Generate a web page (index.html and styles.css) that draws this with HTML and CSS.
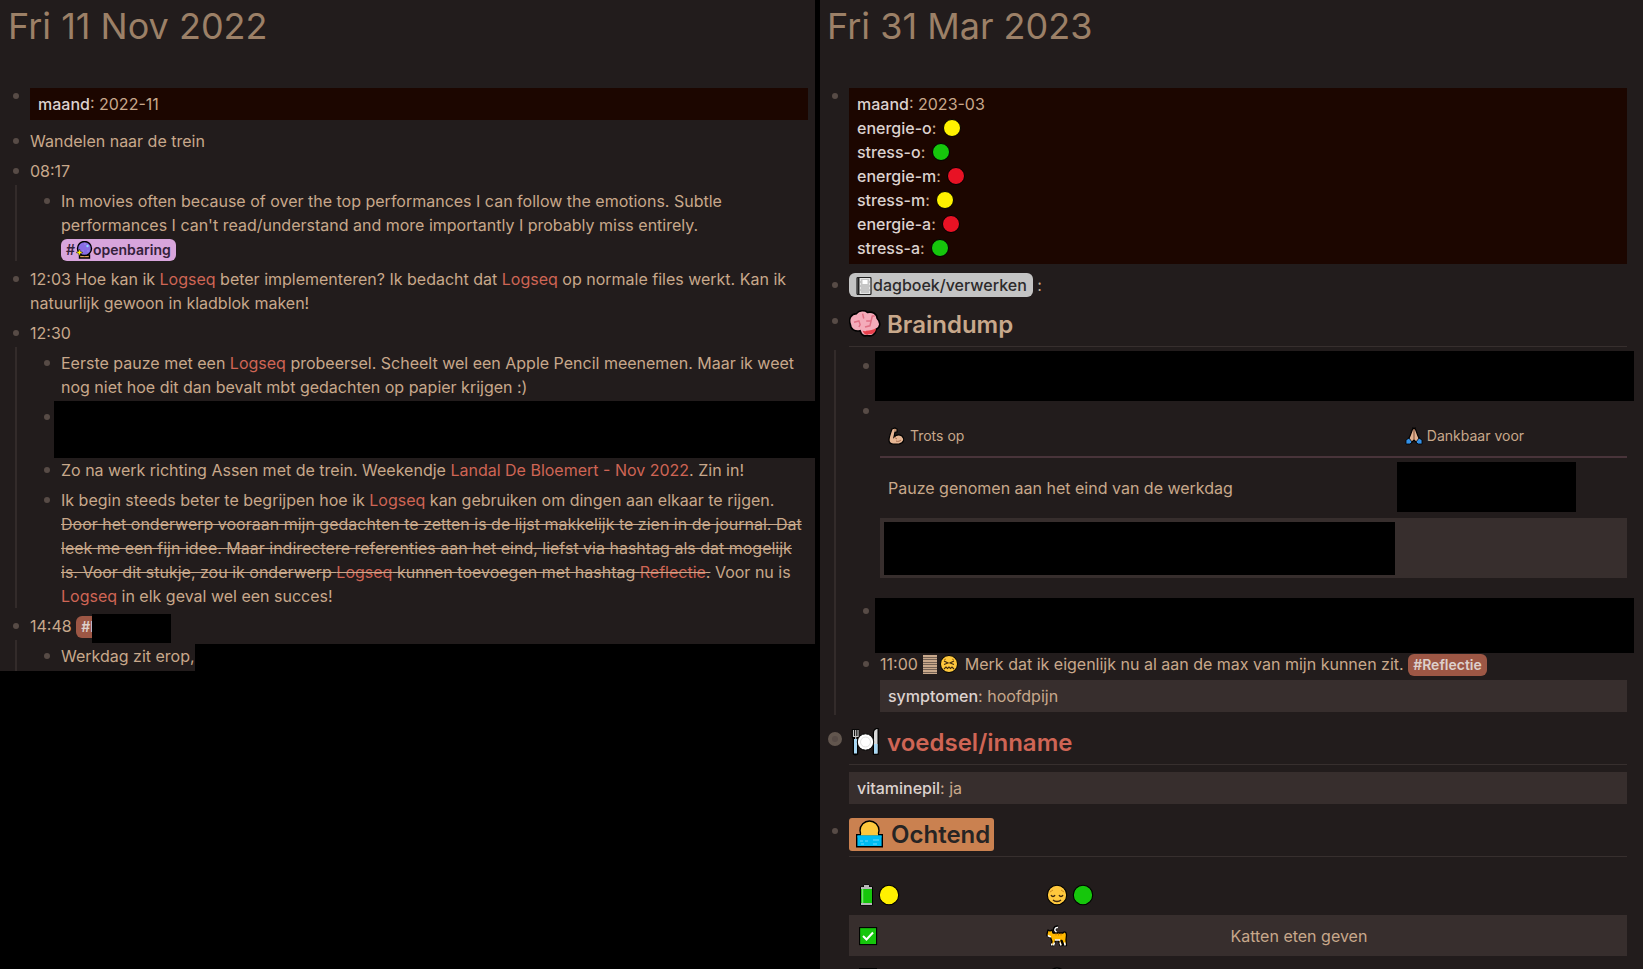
FILE: index.html
```html
<!DOCTYPE html>
<html lang="nl">
<head>
<meta charset="utf-8">
<title>Journal</title>
<link rel="stylesheet" href="styles.css">
</head>
<body>
<svg class="defs" width="0" height="0" aria-hidden="true">
  <symbol id="dot" viewBox="0 0 20 20"><circle cx="10" cy="10" r="8.500" fill="currentColor" stroke="#000" stroke-width="1"/></symbol>
  <symbol id="ball" viewBox="0 1 17 18"><path d="M4 15h10v3H4z" fill="#d9a05b" stroke="#000" stroke-width="1.400"/><circle cx="9" cy="8.500" r="7" fill="#886ce4" stroke="#000" stroke-width="1.400"/><circle cx="12" cy="6" r="1.200" fill="#8fd8ff"/><path d="M9 4h1M7 11h1M12 11h1" stroke="#b8a6f5"/><path d="M4 9l1 2.500 2.500 1-2.500 1-1 2.500-1-2.500-2.500-1 2.500-1z" fill="#fff100" stroke="#000" stroke-width=".4"/></symbol>
  <symbol id="book" viewBox="0 1 17 18"><rect x="1.500" y="1.500" width="14" height="17" rx="1" fill="#e6e6e6" stroke="#222" stroke-width="1.200"/><path d="M3 2v16" stroke="#222" stroke-width="2"/><path d="M6 4h8M5 6h9M6 8h8M5 10h9M6 12h8M5 14h9M6 16h8" stroke="#666" stroke-width="1" stroke-dasharray="1 1"/><rect x="7" y="4" width="5" height="4" fill="#fff"/></symbol>
  <symbol id="brain" viewBox="3 3 26 23"><path d="M4 15c-2-5 1-9 5-9 2-3 7-3 9-1 4-1 8 1 8 5 3 3 3 7-1 9 0 4-4 6-7 5-3 1-5-1-6-4-4 1-8-1-8-5z" fill="#f4abba" stroke="#000" stroke-width="1.300"/><path d="M17 20c3 0 6-1 8-2 0 4-3 5-6 5-3 1-4-1-5-3 1 0 2 1 3 0z" fill="#e8404c"/><path d="M7 13l4-1 1 3-1 2M14 6l1 4M17 12h4l1-4h2M21 12l-1 4-4 1" fill="none" stroke="#e06f84" stroke-width="1.200"/></symbol>
  <symbol id="arm" viewBox="1 1 18 18"><path d="M5 3l3-1 2 1v3H8l-1 5c2-2 5-3 8-1 3 3 2 7-3 8H6c-3 0-4-2-4-4C2 11 4 6 5 3z" fill="#e6b593" stroke="#000" stroke-width="1.200"/><path d="M7 11l3 2M9 15c2 1 4 0 5-1M7 4h2" fill="none" stroke="#a36c4d"/></symbol>
  <symbol id="pray" viewBox="1 1 18 18"><path d="M9 2l-3 8-2 4 3 3 3-3 3 3 3-3-2-4-3-8-1 1z" fill="#e0b090" stroke="#000" stroke-width="1.200"/><path d="M10 3v11" stroke="#7b4a35" stroke-width="1"/><path d="M2 14l3-2 3 4-2 2H2zM18 14l-3-2-3 4 2 2h4z" fill="#3391e8" stroke="#000" stroke-width=".8"/></symbol>
  <symbol id="stack" viewBox="0 0 16 20"><path d="M1 2h14M1 4.500h14M1 7h14M1 9.500h14M1 12h14M1 14.500h14M1 17h14M1 19.500h14" stroke="#c8a88b" stroke-width="1.800"/></symbol>
  <symbol id="pained" viewBox="0 0 20 20"><circle cx="10" cy="10" r="8.500" fill="#ffc83d" stroke="#000" stroke-width="1"/><path d="M5 6l2-1M15 6l-2-1" stroke="#9c6500" stroke-width=".8"/><path d="M5 7l4 2-4 1.500M15 7l-4 2 4 1.500M5 15l2-2 1.500 1.500L10 13l1.500 1.500L13 13l2 2" fill="none" stroke="#402a10" stroke-width="1.100"/></symbol>
  <symbol id="plate" viewBox="0 0 32 28"><path d="M3.500 2v7l1 2v15q2 1.500 4 0V11l1-2V2z" fill="#000" stroke="#000" stroke-width="1.500"/><path d="M4.500 2v6.500h4.500V2M6.700 2v9" fill="none" stroke="#c6c6c6" stroke-width="1.200"/><path d="M5 11h3v14.500H5z" fill="#a8d8f5"/><path d="M25 25.500V5c0-3 2-4 3.500-4v24.500z" fill="#d8d8d8" stroke="#000" stroke-width="2.400"/><path d="M25 25.500V5c0-3 2-4 3.500-4v24.500z" fill="#d8d8d8"/><path d="M25 16h3.500v9.500H25z" fill="#a8d8f5"/><circle cx="16.500" cy="14" r="8.200" fill="#fff" stroke="#000" stroke-width="1"/><circle cx="16.500" cy="14" r="5" fill="none" stroke="#e2e2e2"/></symbol>
  <symbol id="sunrise" viewBox="0 0 32 28"><circle cx="16.500" cy="10.500" r="9.500" fill="#ffc83d" stroke="#000" stroke-width="1.400"/><path d="M3.700 14.700h25.600v12H3.700z" fill="#00bcf2" stroke="#000" stroke-width="1.400"/><path d="M8 14.500h17" stroke="#ffc83d" stroke-width="2"/><path d="M4.500 15.500h24v2h-24z" fill="#00bcf2"/><path d="M7 21h3M12 21h3M20 20h6M8 24h3M20 24h4" stroke="#6fd9f8" stroke-width="1"/></symbol>
  <symbol id="battery" viewBox="0 0 19 24"><path d="M7 2h5v2h3.500v18h-12V4H7z" fill="#16c60c" stroke="#000" stroke-width="1"/><path d="M4 4h11v2H4zM4 20h11v2H4zM7 2h5v2H7z" fill="#b7b7b7"/><path d="M5.500 6v14" stroke="#78e072" stroke-width="1.500"/></symbol>
  <symbol id="bigdot" viewBox="0 0 26 24"><circle cx="13" cy="12" r="9.700" fill="currentColor" stroke="#000" stroke-width="1.100"/></symbol>
  <symbol id="calm" viewBox="0 0 26 24"><circle cx="13" cy="12" r="9.700" fill="#ffc83d" stroke="#000" stroke-width="1.100"/><path d="M6 9l3-2M20 9l-3-2" stroke="#d08b1c"/><path d="M7 12c1 2 3 2 4 0M15 12c1 2 3 2 4 0M9 17c2 2 6 2 8 0" fill="none" stroke="#402a10" stroke-width="1.300"/></symbol>
  <symbol id="check" viewBox="0 0 22 24"><rect x="2.600" y="3.600" width="17" height="17" fill="#16c60c" stroke="#000" stroke-width="1.100"/><path d="M6 12l3.500 3.500L16 8.500" fill="none" stroke="#fff" stroke-width="2"/></symbol>
  <symbol id="cat" viewBox="0 0 26 24"><path d="M12 7.500c-3-1.500-1.500-5 2-4.500" fill="none" stroke="#000" stroke-width="3.200"/><path d="M4 6l2 1 2-1 1 3h10c1-2 3.500-1 3.500 2l-.5 5 .5 5.500h-2.500l-2-5h-1l1.500 5H16l-1.500-5h-3l-1.500 5H7l1-4-1.500-4C4 13 2.500 12 3 10z" fill="#ffb900" stroke="#000" stroke-width="1.300" stroke-linejoin="round"/><path d="M12.500 8c-3-1.500-1.500-5 1.500-4.500" fill="none" stroke="#fff" stroke-width="1.400"/><path d="M12 9.500v2M14.500 9.500v2M17 9.500v2" stroke="#d67f00" stroke-width="1"/><path d="M3.800 11.500l3 1.500M11 16h5" stroke="#fff" stroke-width="1.500"/><path d="M8 19.500l-.5 2M10.500 18.500l-1 3M16 18.500l1 3M20.500 18.500l.7 3" stroke="#fff" stroke-width="1.500"/></symbol>
  <symbol id="box" viewBox="0 0 22 24"><rect x="2" y="3" width="18" height="18" fill="#000"/></symbol>
  <symbol id="bell" viewBox="0 0 26 24"><circle cx="13" cy="11" r="8" fill="#8b8585" stroke="#000" stroke-width="1.500"/></symbol>
</svg>

<main class="journals">
  <section class="panel panel-old">
    <h1 class="title">Fri 11 Nov 2022</h1>
    <ul class="tree">
      <li class="block"><span class="bullet"></span>
        <div class="content"><div class="props dark"><div><b>maand</b>: 2022-11</div></div></div></li>
      <li class="block"><span class="bullet"></span><div class="content">Wandelen naar de trein</div></li>
      <li class="block"><span class="bullet"></span><div class="content">08:17</div>
        <ul class="tree children">
          <li class="block"><span class="bullet"></span><div class="content">In movies often because of over the top performances I can follow the emotions. Subtle performances I can't read/understand and more importantly I probably miss entirely. <a class="tag lilac" href="#openbaring">#<svg class="tag-icon"><use href="#ball"/></svg>openbaring</a></div></li>
        </ul></li>
      <li class="block"><span class="bullet"></span><div class="content">12:03 Hoe kan ik <a href="#logseq">Logseq</a> beter implementeren? Ik bedacht dat <a href="#logseq">Logseq</a> op normale files werkt. Kan ik natuurlijk gewoon in kladblok maken!</div></li>
      <li class="block"><span class="bullet"></span><div class="content">12:30</div>
        <ul class="tree children">
          <li class="block"><span class="bullet"></span><div class="content">Eerste pauze met een <a href="#logseq">Logseq</a> probeersel. Scheelt wel een Apple Pencil meenemen. Maar ik weet nog niet hoe dit dan bevalt mbt gedachten op papier krijgen :)</div></li>
          <li class="block"><span class="bullet"></span><div class="content hidden-entry"></div></li>
          <li class="block"><span class="bullet"></span><div class="content">Zo na werk richting Assen met de trein. Weekendje <a href="#landal">Landal De Bloemert - Nov 2022</a>. Zin in!</div></li>
          <li class="block"><span class="bullet"></span><div class="content">Ik begin steeds beter te begrijpen hoe ik <a href="#logseq">Logseq</a> kan gebruiken om dingen aan elkaar te rijgen. <del>Door het onderwerp vooraan mijn gedachten te zetten is de lijst makkelijk te zien in de journal. Dat leek me een fijn idee. Maar indirectere referenties aan het eind, liefst via hashtag als dat mogelijk is. Voor dit stukje, zou ik onderwerp <a href="#logseq">Logseq</a> kunnen toevoegen met hashtag <a href="#reflectie">Reflectie</a>.</del> Voor nu is <a href="#logseq">Logseq</a> in elk geval wel een succes!</div></li>
        </ul></li>
      <li class="block"><span class="bullet"></span><div class="content">14:48 <span class="tag rust covered">#I</span></div>
        <ul class="tree children">
          <li class="block"><span class="bullet"></span><div class="content cut"><span>Werkdag zit erop,</span><span class="fill"></span></div></li>
        </ul></li>
    </ul>
  </section>

  <section class="panel panel-new">
    <h1 class="title">Fri 31 Mar 2023</h1>
    <ul class="tree">
      <li class="block"><span class="bullet"></span>
        <div class="content"><div class="props dark">
          <div><b>maand</b>: 2023-03</div>
          <div><b>energie-o</b>: <svg class="emoji yellow"><use href="#dot"/></svg></div>
          <div><b>stress-o</b>: <svg class="emoji green"><use href="#dot"/></svg></div>
          <div><b>energie-m</b>: <svg class="emoji red"><use href="#dot"/></svg></div>
          <div><b>stress-m</b>: <svg class="emoji yellow"><use href="#dot"/></svg></div>
          <div><b>energie-a</b>: <svg class="emoji red"><use href="#dot"/></svg></div>
          <div><b>stress-a</b>: <svg class="emoji green"><use href="#dot"/></svg></div>
        </div></div></li>
      <li class="block"><span class="bullet"></span><div class="content"><a class="tag page" href="#verwerken"><svg class="tag-icon"><use href="#book"/></svg>dagboek/verwerken</a> :</div></li>
      <li class="block headed"><span class="bullet"></span>
        <div class="content"><h2><svg class="head-icon"><use href="#brain"/></svg> Braindump</h2></div>
        <ul class="tree children">
          <li class="block"><span class="bullet"></span><div class="content hidden-entry short"></div></li>
          <li class="block"><span class="bullet"></span><div class="content">
            <table class="gratitude">
              <thead><tr><th><svg class="small-icon"><use href="#arm"/></svg> Trots op</th><th><svg class="small-icon"><use href="#pray"/></svg> Dankbaar voor</th></tr></thead>
              <tbody>
                <tr><td>Pauze genomen aan het eind van de werkdag</td><td class="masked"><div class="mask partial"></div></td></tr>
                <tr class="shade"><td class="masked"><div class="mask"></div></td><td></td></tr>
              </tbody>
            </table></div></li>
          <li class="block"><span class="bullet"></span><div class="content hidden-entry"></div></li>
          <li class="block"><span class="bullet"></span><div class="content">11:00 <svg class="stack"><use href="#stack"/></svg><svg class="emoji"><use href="#pained"/></svg> Merk dat ik eigenlijk nu al aan de max van mijn kunnen zit. <a class="tag rust" href="#reflectie">#Reflectie</a>
            <div class="props"><div><b>symptomen</b>: hoofdpijn</div></div></div></li>
        </ul></li>
      <li class="block headed"><span class="bullet folded"></span>
        <div class="content"><h2><svg class="head-icon"><use href="#plate"/></svg> <a href="#voedsel">voedsel/inname</a></h2>
          <div class="props"><div><b>vitaminepil</b>: ja</div></div></div></li>
      <li class="block headed"><span class="bullet"></span>
        <div class="content"><h2><mark><svg class="head-icon"><use href="#sunrise"/></svg> Ochtend</mark></h2>
          <table class="routine">
            <tbody>
              <tr><td><svg class="battery"><use href="#battery"/></svg><svg class="big yellow"><use href="#bigdot"/></svg></td><td><svg class="big"><use href="#calm"/></svg><svg class="big green"><use href="#bigdot"/></svg></td><td></td></tr>
              <tr class="shade"><td><svg class="check"><use href="#check"/></svg></td><td><svg class="big"><use href="#cat"/></svg></td><td>Katten eten geven</td></tr>
              <tr><td><svg class="check"><use href="#box"/></svg></td><td><svg class="big"><use href="#bell"/></svg></td><td></td></tr>
            </tbody>
          </table></div></li>
    </ul>
  </section>
</main>
</body>
</html>
```
FILE: styles.css
```css
* { box-sizing: border-box; }

body {
  margin: 0;
  height: 100vh;
  overflow: hidden;
  background: #000;
  color: #c8a88b;
  font: 16px/24px Inter, "Noto Sans", sans-serif;
}

a { color: #cf6555; text-decoration: none; }
b { color: #ddd2cf; font-weight: 500; }
svg { overflow: visible; }
.defs { position: absolute; }

.journals {
  display: grid;
  grid-template-columns: 815fr 823fr;
  column-gap: 5px;
  height: 100%;
}

.panel { background: #221c1c; min-width: 0; }
.panel-old { --edge: 7px; padding: 0 var(--edge) 0 8px; align-self: start; }
.panel-new { --edge: 16px; padding: 0 var(--edge) 0 7px; }

.title {
  margin: 0 0 32px;
  color: #9c8067;
  font-size: 36px;
  font-weight: 400;
  font-optical-sizing: none;
  line-height: 52px;
}

.tree { display: flex; flex-direction: column; gap: 6px; margin: 0; padding: 0; list-style: none; }
.children {
  grid-column: 1 / -1;
  margin: 2px 0 0 7px;
  padding: 4px 0 0 22px;
  border-left: 2px solid #332b2a;
}
.block { display: grid; grid-template-columns: 22px minmax(0, 1fr); }
.bullet { width: 6px; height: 6px; margin: 9px 0 0 5px; border-radius: 50%; background: #574b46; }
.headed > .bullet { margin-top: 15px; }
.headed > .bullet.folded {
  width: 14px;
  height: 14px;
  margin: 11px 0 0 1px;
  border: 4px solid #62564e;
}

.props { margin: 4px 0 3px; padding: 4px 8px; background: #372e2d; }
.props.dark { background: #1c0600; }

.emoji { width: 22px; height: 20px; vertical-align: -4px; }
.yellow { color: #fff100; }
.green { color: #16c60c; }
.red { color: #e81224; }
.stack { width: 16px; height: 20px; vertical-align: -4px; }

.tag {
  display: inline-block;
  padding: 0 5px;
  border-radius: 6px;
  font-size: 14px;
  font-weight: 600;
  line-height: 22px;
}
.tag-icon { width: 18px; height: 18px; vertical-align: -4px; }
.lilac { background: #d8a5dc; color: #33203a; }
.rust { background: #9d5745; color: #ddd0cc; }
.page { padding: 0 6px; background: #c4c4c4; color: #2c2a2b; font-size: 16px; font-weight: 500; line-height: 24px; }

.covered { position: relative; }
.covered::after {
  content: "";
  position: absolute;
  top: -2px;
  left: 16px;
  width: 79px;
  height: 29px;
  background: #000;
}

.hidden-entry { height: 47px; position: relative; }
.hidden-entry::after {
  content: "";
  position: absolute;
  inset: -4px -7px -6px -7px;
  background: #000;
}
.panel-new .hidden-entry::after { inset: -1px -7px -7px -5px; }
.panel-new .hidden-entry.short { height: 39px; }
.panel-new .hidden-entry.short::after { inset: -3px -7px -8px -5px; }

.cut { display: flex; height: 27px; margin-right: calc(0px - var(--edge)); }
.fill { flex: 1; background: #000; }

h2 {
  margin: 4px 0 1px;
  padding-bottom: 3px;
  border-bottom: 1px solid #372f2e;
  font-size: 24px;
  font-weight: 600;
  font-optical-sizing: none;
  line-height: 36px;
}
h2 + .props { margin-top: 7px; }
.head-icon { width: 32px; height: 28px; vertical-align: -5px; }
mark { padding: 2px 4px; border-radius: 3px; background: #ca8150; color: #262424; }

table { width: 100%; border-collapse: collapse; table-layout: fixed; }
th, td { padding: 0 8px; text-align: left; }
.shade { background: #372e2d; }

.gratitude { margin: 27px 0 15px; }
.gratitude th { padding-bottom: 10px; border-bottom: 2px solid #49343a; font-size: 14px; font-weight: 400; line-height: 20px; }
.gratitude th:first-child { width: 69.2%; }
.gratitude td { height: 61px; }
.gratitude .shade td { height: 60px; }
.small-icon { width: 18px; height: 18px; vertical-align: -4px; }
.gratitude td.masked { padding: 4px 2px 0 4px; vertical-align: top; }
.gratitude td.masked:last-child { padding: 4px 0 0; }
.mask { height: 53px; background: #000; }
.mask.partial { width: 78%; height: 50px; }

.routine { margin-top: 17px; }
.routine td { height: 41px; line-height: 24px; }
.routine td:nth-child(1), .routine td:nth-child(2) { width: 24%; }
.big, .check, .battery { width: 26px; height: 24px; vertical-align: middle; }
.check { width: 22px; }
.battery { width: 19px; }
```
